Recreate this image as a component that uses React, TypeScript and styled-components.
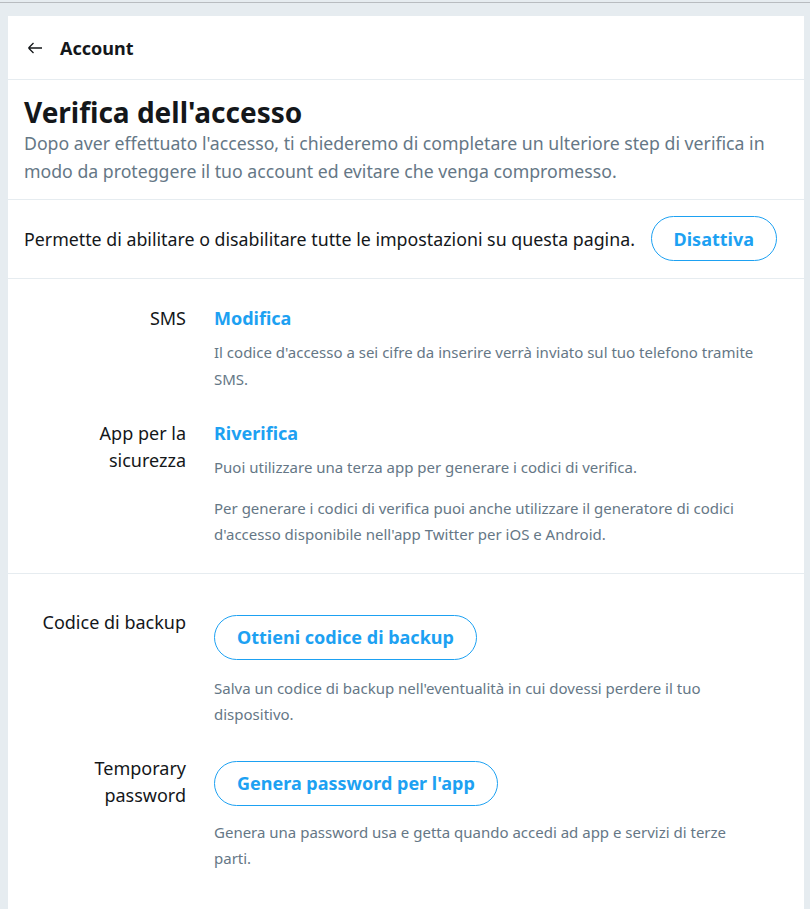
import React from "react";
import styled, { createGlobalStyle } from "styled-components";

const GlobalStyle = createGlobalStyle`
  html, body {
    margin: 0;
    padding: 0;
    background: #e6ecf0;
  }
  body {
    font-family: "Noto Sans", "Open Sans", Arial, sans-serif;
    color: #14171a;
  }
  * { box-sizing: border-box; }
`;

const TopLine = styled.div`
  height: 3px;
  border-top: 2px solid #e6ecf0;
  background: #b8bcc0;
`;

const Page = styled.div`
  padding: 13px 6px 0 8px;
`;

const Panel = styled.main`
  background: #ffffff;
  min-height: 893px;
`;

const Header = styled.header`
  height: 64px;
  display: flex;
  align-items: center;
  padding-left: 19px;
  gap: 17px;
  border-bottom: 1px solid #e6ecf0;
`;

const BackIcon = styled.svg`
  width: 16px;
  height: 16px;
  flex: none;
`;

const HeaderTitle = styled.h2`
  margin: 0;
  font-size: 18px;
  font-weight: 700;
  line-height: 24px;
`;

const Intro = styled.section`
  padding: 15px 16px 14px;
  border-bottom: 1px solid #e6ecf0;
`;

const Title = styled.h1`
  margin: 0;
  font-size: 28px;
  font-weight: 700;
  line-height: 34px;
`;

const Lead = styled.p`
  margin: 0;
  font-size: 17.7px;
  line-height: 28px;
  color: #657786;
`;

const ToggleRow = styled.div`
  display: flex;
  align-items: center;
  justify-content: space-between;
  padding: 16px 27px 17px 16px;
  border-bottom: 1px solid #e6ecf0;
  font-size: 17.8px;
`;

const PillButton = styled.button`
  height: 45px;
  padding: 0 22px;
  border: 1px solid #1da1f2;
  border-radius: 9999px;
  background: #ffffff;
  color: #1da1f2;
  font-family: inherit;
  font-size: 18px;
  font-weight: 700;
  cursor: pointer;
  white-space: nowrap;
`;

const Section = styled.section<{ $top: number; $bottom: number; $gap: number; $border?: boolean }>`
  display: flex;
  flex-direction: column;
  gap: ${(p) => p.$gap}px;
  padding: ${(p) => p.$top}px 16px ${(p) => p.$bottom}px;
  border-bottom: ${(p) => (p.$border ? "1px solid #e6ecf0" : "none")};
`;

const SettingRow = styled.div`
  display: grid;
  grid-template-columns: 162px 1fr;
  column-gap: 28px;
`;

const Label = styled.div`
  text-align: right;
  font-size: 18px;
  line-height: 27px;
  color: #14171a;
`;

const Value = styled.div<{ $padTop?: number }>`
  display: flex;
  flex-direction: column;
  align-items: flex-start;
  max-width: 550px;
  padding-top: ${(p) => p.$padTop ?? 0}px;
`;

const LinkTitle = styled.a`
  font-size: 18px;
  font-weight: 700;
  line-height: 27px;
  color: #1da1f2;
  text-decoration: none;
  margin-bottom: 7px;
`;

const Desc = styled.p<{ $mt?: number }>`
  margin: ${(p) => p.$mt ?? 0}px 0 0;
  font-size: 15px;
  line-height: 26.5px;
  color: #657786;
`;

const ArrowLeft = () => (
  <BackIcon viewBox="0 0 16 16" fill="none" stroke="#14171a" strokeWidth="1.3">
    <path d="M1.5 8h13.5M1.5 8l5-5M1.5 8l5 5" />
  </BackIcon>
);

export default function App() {
  return (
    <>
      <GlobalStyle />
      <TopLine />
      <Page>
        <Panel>
          <Header>
            <ArrowLeft />
            <HeaderTitle>Account</HeaderTitle>
          </Header>
          <Intro>
            <Title>Verifica dell'accesso</Title>
            <Lead>
              Dopo aver effettuato l'accesso, ti chiederemo di completare un ulteriore step di verifica in
              modo da proteggere il tuo account ed evitare che venga compromesso.
            </Lead>
          </Intro>
          <ToggleRow>
            <span>Permette di abilitare o disabilitare tutte le impostazioni su questa pagina.</span>
            <PillButton>Disattiva</PillButton>
          </ToggleRow>
          <Section $top={26} $bottom={25} $gap={28} $border>
            <SettingRow>
              <Label>SMS</Label>
              <Value>
                <LinkTitle href="#">Modifica</LinkTitle>
                <Desc>
                  Il codice d'accesso a sei cifre da inserire verrà inviato sul tuo telefono tramite SMS.
                </Desc>
              </Value>
            </SettingRow>
            <SettingRow>
              <Label>
                App per la
                <br />
                sicurezza
              </Label>
              <Value>
                <LinkTitle href="#">Riverifica</LinkTitle>
                <Desc>Puoi utilizzare una terza app per generare i codici di verifica.</Desc>
                <Desc $mt={14}>
                  Per generare i codici di verifica puoi anche utilizzare il generatore di codici d'accesso
                  disponibile nell'app Twitter per iOS e Android.
                </Desc>
              </Value>
            </SettingRow>
          </Section>
          <Section $top={35} $bottom={30} $gap={27}>
            <SettingRow>
              <Label>Codice di backup</Label>
              <Value $padTop={6}>
                <PillButton>Ottieni codice di backup</PillButton>
                <Desc $mt={15}>
                  Salva un codice di backup nell'eventualità in cui dovessi perdere il tuo dispositivo.
                </Desc>
              </Value>
            </SettingRow>
            <SettingRow>
              <Label>
                Temporary
                <br />
                password
              </Label>
              <Value $padTop={6}>
                <PillButton>Genera password per l'app</PillButton>
                <Desc $mt={13}>
                  Genera una password usa e getta quando accedi ad app e servizi di terze parti.
                </Desc>
              </Value>
            </SettingRow>
          </Section>
        </Panel>
      </Page>
    </>
  );
}
